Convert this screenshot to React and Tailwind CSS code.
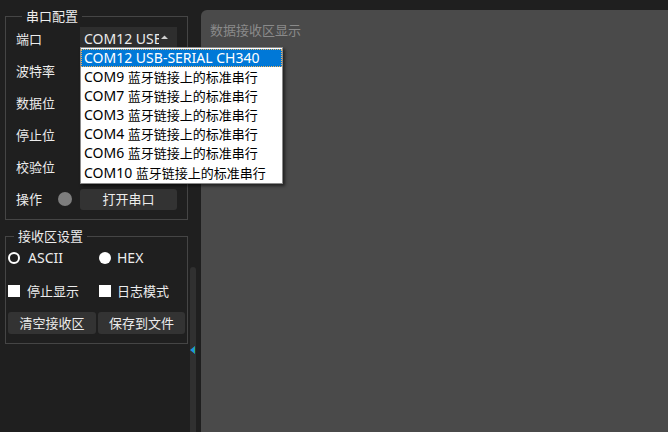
import React from "react";

const font = { fontFamily: '"Noto Sans CJK SC", "Noto Sans", sans-serif' };

function L({ children }) {
  return (
    <span className="text-[14px]" style={{ fontFamily: '"Noto Sans", "Noto Sans CJK SC", sans-serif' }}>
      {children}
    </span>
  );
}

function Row({ children }) {
  return <div className="flex h-[32px] items-center">{children}</div>;
}

export default function App() {
  const items = [
    ["COM9 ", "蓝牙链接上的标准串行"],
    ["COM7 ", "蓝牙链接上的标准串行"],
    ["COM3 ", "蓝牙链接上的标准串行"],
    ["COM4 ", "蓝牙链接上的标准串行"],
    ["COM6 ", "蓝牙链接上的标准串行"],
    ["COM10 ", "蓝牙链接上的标准串行"],
  ];
  return (
    <div
      className="flex h-[432px] w-[668px] overflow-hidden bg-[#1f1f1f] text-[13px] text-[#ececec]"
      style={font}
    >
      {/* left column */}
      <div className="flex w-[190px] shrink-0 flex-col pl-[5px]">
        <fieldset className="mt-[8px] w-[183px] border border-[#454545] pb-[4px] pl-[10px]">
          <legend className="ml-[6px] px-[4px] leading-[16px]">串口配置</legend>
          <div className="-mt-[1px] flex flex-col">
            <Row>
              <span className="w-[64px]">端口</span>
              <div className="relative -mt-[4px] h-[20px] w-[97px]">
                <div className="flex h-full items-center bg-[#2e2e2e] pl-[4px] pt-[3px]">
                  <span className="w-[75px] overflow-hidden whitespace-nowrap leading-[16px]">
                    <L>COM12 USB-SERIAL CH340</L>
                  </span>
                  <svg width="7" height="4" viewBox="0 0 7 4" className="ml-[2px] -mt-[4px]">
                    <polygon points="0,4 3.5,0.5 7,4" fill="#cfcfcf" />
                  </svg>
                </div>
                <div className="absolute left-0 top-[20px] z-10 w-[203px] border border-[#8a8a8a] bg-white py-[1px] text-black shadow-[2px_2px_3px_rgba(0,0,0,0.55)]">
                  <div className="flex h-[18px] items-center bg-[#0078d7] pl-[3px] text-white outline-1 outline-dotted -outline-offset-1 outline-[#f2b25a] leading-[16px] whitespace-nowrap">
                    <L>COM12 USB-SERIAL CH340</L>
                  </div>
                  {items.map(([a, b]) => (
                    <div key={a} className="flex h-[19.2px] items-center pl-[3px] leading-[16px] whitespace-pre">
                      <L>{a}</L>
                      {b}
                    </div>
                  ))}
                </div>
              </div>
            </Row>
            <Row>
              <span className="w-[64px]">波特率</span>
            </Row>
            <Row>
              <span className="w-[64px]">数据位</span>
            </Row>
            <Row>
              <span className="w-[64px]">停止位</span>
            </Row>
            <Row>
              <span className="w-[64px]">校验位</span>
            </Row>
            <Row>
              <span className="w-[42px]">操作</span>
              <span className="h-[14px] w-[14px] rounded-full bg-[#7d7d7d]" />
              <button className="ml-[8px] h-[21px] w-[97px] rounded-[3px] bg-[#333333] leading-[16px]">
                打开串口
              </button>
            </Row>
          </div>
        </fieldset>

        <fieldset className="mt-[8px] w-[183px] border border-[#454545] pb-[9px] pl-[2px]">
          <legend className="ml-[6px] px-[4px] leading-[16px]">接收区设置</legend>
          <div className="mt-[4px] flex h-[20px] items-center">
            <div className="flex w-[91px] items-center">
              <span className="box-border h-[12px] w-[12px] rounded-full border-[2.5px] border-white bg-[#1f1f1f]" />
              <span className="ml-[8px] leading-[16px]"><L>ASCII</L></span>
            </div>
            <div className="flex items-center">
              <span className="h-[12px] w-[12px] rounded-full bg-white" />
              <span className="ml-[6px] leading-[16px]"><L>HEX</L></span>
            </div>
          </div>
          <div className="mt-[13px] flex h-[20px] items-center">
            <div className="flex w-[91px] items-center">
              <span className="h-[12px] w-[12px] bg-white" />
              <span className="ml-[7px] leading-[16px]">停止显示</span>
            </div>
            <div className="flex items-center">
              <span className="h-[12px] w-[12px] bg-white" />
              <span className="ml-[6px] leading-[16px]">日志模式</span>
            </div>
          </div>
          <div className="mt-[11px] flex gap-[2px]">
            <button className="h-[22px] w-[88px] rounded-[3px] bg-[#333333] leading-[16px]">清空接收区</button>
            <button className="h-[22px] w-[87px] rounded-[3px] bg-[#333333] leading-[16px]">保存到文件</button>
          </div>
        </fieldset>
      </div>

      {/* scrollbar */}
      <div className="flex w-[6px] shrink-0 flex-col pt-[267px]">
        <div className="relative flex-1 rounded-t-[3px] bg-[#303030]">
          <svg width="6" height="8" viewBox="0 0 6 8" className="absolute left-0 top-[79px]">
            <polygon points="0,4 5,0 5,8" fill="#1e8fe6" />
            <rect x="4" y="1" width="1" height="6" fill="#2bb673" />
          </svg>
        </div>
      </div>

      {/* right panel */}
      <div className="ml-[5px] mt-[10px] flex-1 rounded-tl-[6px] bg-[#4a4a4a] pl-[9px] pt-[10px]">
        <span className="leading-[16px] text-[#8a8a8a]">数据接收区显示</span>
      </div>
    </div>
  );
}
